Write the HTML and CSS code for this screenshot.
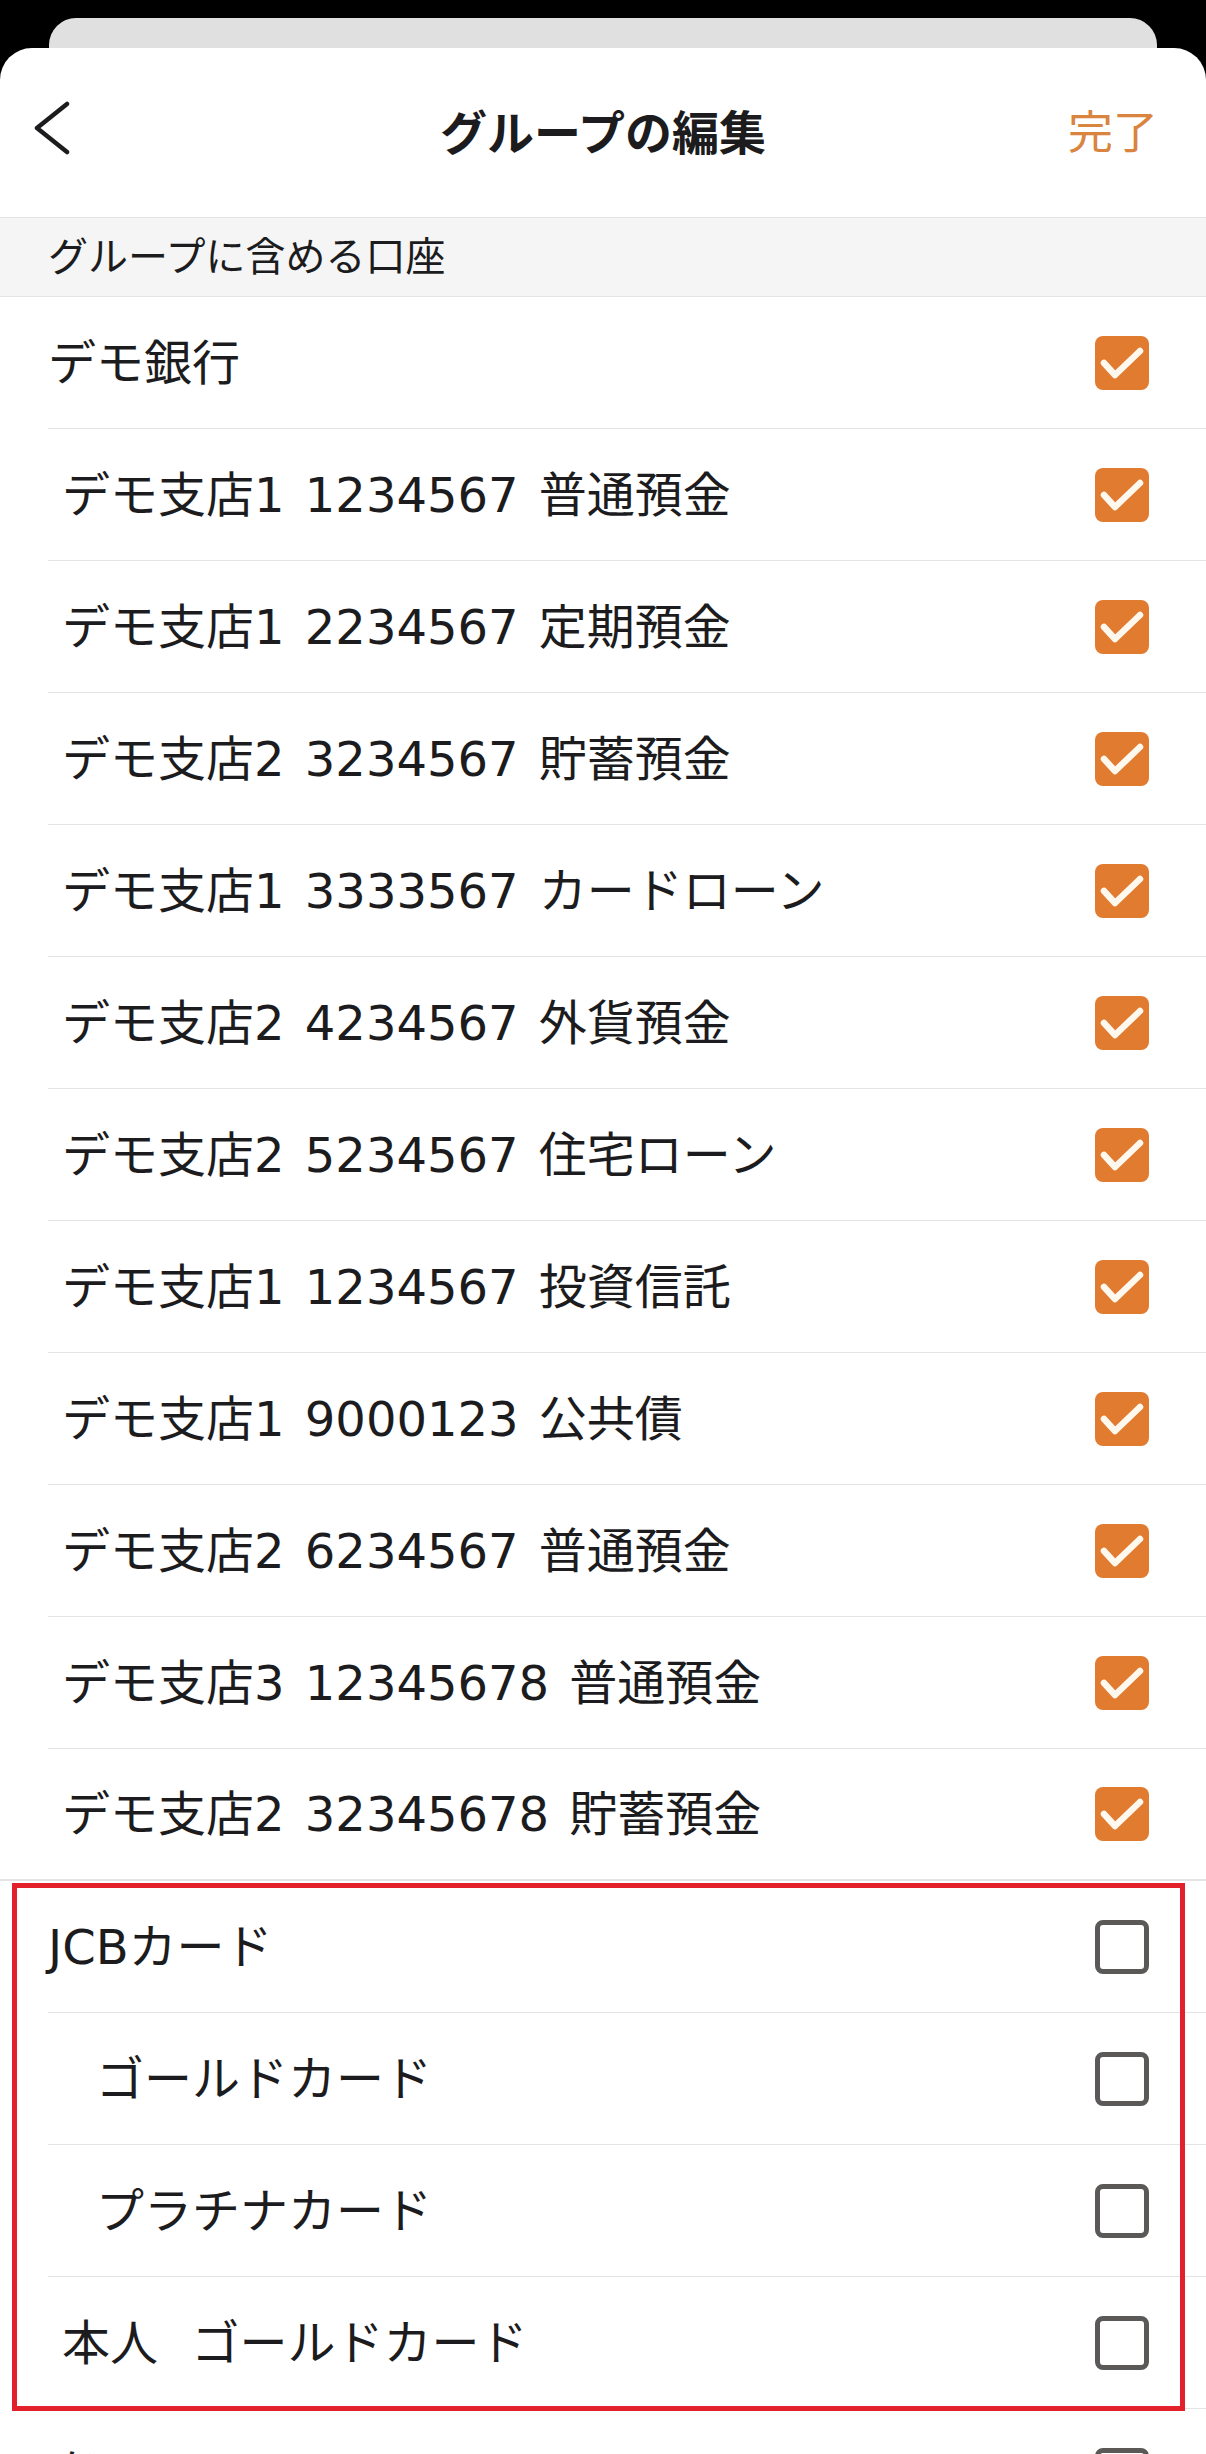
FILE: index.html
```html
<!DOCTYPE html>
<html lang="ja">
<head>
    <meta charset="UTF-8">
    <meta name="viewport" content="width=device-width, initial-scale=1.0">
    <title>グループの編集</title>
    <link rel="stylesheet" href="styles.css">
</head>
<body>
    <div class="backdrop"></div>
    <div class="sheet">
        <header class="nav">
            <a class="nav-back" aria-label="戻る">
                <svg width="36" height="54" viewBox="0 0 36 54">
                    <polyline points="33,3 3,27 33,51" fill="none" stroke="#1c1c1e" stroke-width="4.5" stroke-linecap="round" stroke-linejoin="round"/>
                </svg>
            </a>
            <h1 class="nav-title">グループの編集</h1>
            <a class="nav-done">完了</a>
        </header>

        <div class="section-title">グループに含める口座</div>

        <!-- 銀行 -->
        <ul class="group">
            <li class="row level-0"><span>デモ銀行</span><i class="box checked"></i></li>
            <li class="row level-1"><span>デモ支店1 1234567 普通預金</span><i class="box checked"></i></li>
            <li class="row level-1"><span>デモ支店1 2234567 定期預金</span><i class="box checked"></i></li>
            <li class="row level-1"><span>デモ支店2 3234567 貯蓄預金</span><i class="box checked"></i></li>
            <li class="row level-1"><span>デモ支店1 3333567 カードローン</span><i class="box checked"></i></li>
            <li class="row level-1"><span>デモ支店2 4234567 外貨預金</span><i class="box checked"></i></li>
            <li class="row level-1"><span>デモ支店2 5234567 住宅ローン</span><i class="box checked"></i></li>
            <li class="row level-1"><span>デモ支店1 1234567 投資信託</span><i class="box checked"></i></li>
            <li class="row level-1"><span>デモ支店1 9000123 公共債</span><i class="box checked"></i></li>
            <li class="row level-1"><span>デモ支店2 6234567 普通預金</span><i class="box checked"></i></li>
            <li class="row level-1"><span>デモ支店3 12345678 普通預金</span><i class="box checked"></i></li>
            <li class="row level-1 last"><span>デモ支店2 32345678 貯蓄預金</span><i class="box checked"></i></li>
        </ul>

        <!-- カード -->
        <ul class="group">
            <li class="row level-0"><span>JCBカード</span><i class="box"></i></li>
            <li class="row level-2"><span>ゴールドカード</span><i class="box"></i></li>
            <li class="row level-2"><span>プラチナカード</span><i class="box"></i></li>
            <li class="row level-1"><span>本人&ensp;&thinsp;ゴールドカード</span><i class="box"></i></li>
            <div class="highlight"></div>
        </ul>
        <ul class="group">
            <li class="row level-0"><span>楽天カード</span><i class="box"></i></li>
        </ul>
    </div>
</body>
</html>
```

FILE: styles.css
```css
body {
    margin: 0;
    background: #000;
    font-family: "Noto Sans CJK JP", "Noto Sans", sans-serif;
    color: #1c1c1e;
    height: 2454px;
    overflow: hidden;
}
.backdrop {
    height: 30px;
    margin: 18px 49px 0;
    background: #e0e0e0;
    border-radius: 27px 27px 0 0;
}
.sheet {
    background: #fff;
    border-radius: 32px 32px 0 0;
    min-height: 2406px;
}
.nav {
    height: 169px;
    display: flex;
    align-items: center;
    justify-content: space-between;
    padding: 0 48px 0 34px;
    position: relative;
}
.nav-back {
    display: flex;
    margin-top: -10px;
}
.nav-title {
    margin: 0;
    font-size: 47px;
    font-weight: 700;
    position: absolute;
    left: 0;
    right: 0;
    text-align: center;
    pointer-events: none;
    margin-top: -6px;
}
.nav-done {
    font-size: 45px;
    color: #d9843f;
    margin-top: -6px;
}
.section-title {
    height: 80px;
    box-sizing: border-box;
    padding: 12px 48px 0;
    background: #f5f5f5;
    border-top: 1px solid #e4e4e4;
    border-bottom: 1px solid #e4e4e4;
    font-size: 40px;
    line-height: 48px;
}
.group {
    list-style: none;
    margin: 0;
    padding: 0;
    position: relative;
}
.row {
    height: 132px;
    box-sizing: border-box;
    display: flex;
    align-items: center;
    justify-content: space-between;
    padding-right: 57px;
    margin-left: 48px;
    border-bottom: 1px solid #e4e4e4;
    font-family: "DejaVu Sans", "Noto Sans CJK JP", sans-serif;
    font-size: 48px;
    line-height: 1;
    word-spacing: 5px;
    white-space: pre;
}
.row.last {
    margin-left: 0;
    padding-left: 48px;
    border-bottom-width: 2px;
}
.level-1 span {
    padding-left: 14px;
}
.level-2 span {
    padding-left: 48px;
}
.row.last span {
    padding-left: 14px;
}
.box {
    width: 54px;
    height: 54px;
    box-sizing: border-box;
    border: 5px solid #5b5957;
    border-radius: 8px;
    flex-shrink: 0;
}
.box.checked {
    border: none;
    background: #e07b30 url("data:image/svg+xml,%3Csvg xmlns='http://www.w3.org/2000/svg' viewBox='0 0 54 54'%3E%3Cpolyline points='9,27 20,39 45,15' fill='none' stroke='%23fff8ee' stroke-width='6.5' stroke-linecap='round' stroke-linejoin='round'/%3E%3C/svg%3E") center / 54px 54px no-repeat;
}
.highlight {
    position: absolute;
    top: 2px;
    left: 12px;
    width: 1173px;
    height: 528px;
    box-sizing: border-box;
    border: 5px solid #e3212b;
    pointer-events: none;
}
```
